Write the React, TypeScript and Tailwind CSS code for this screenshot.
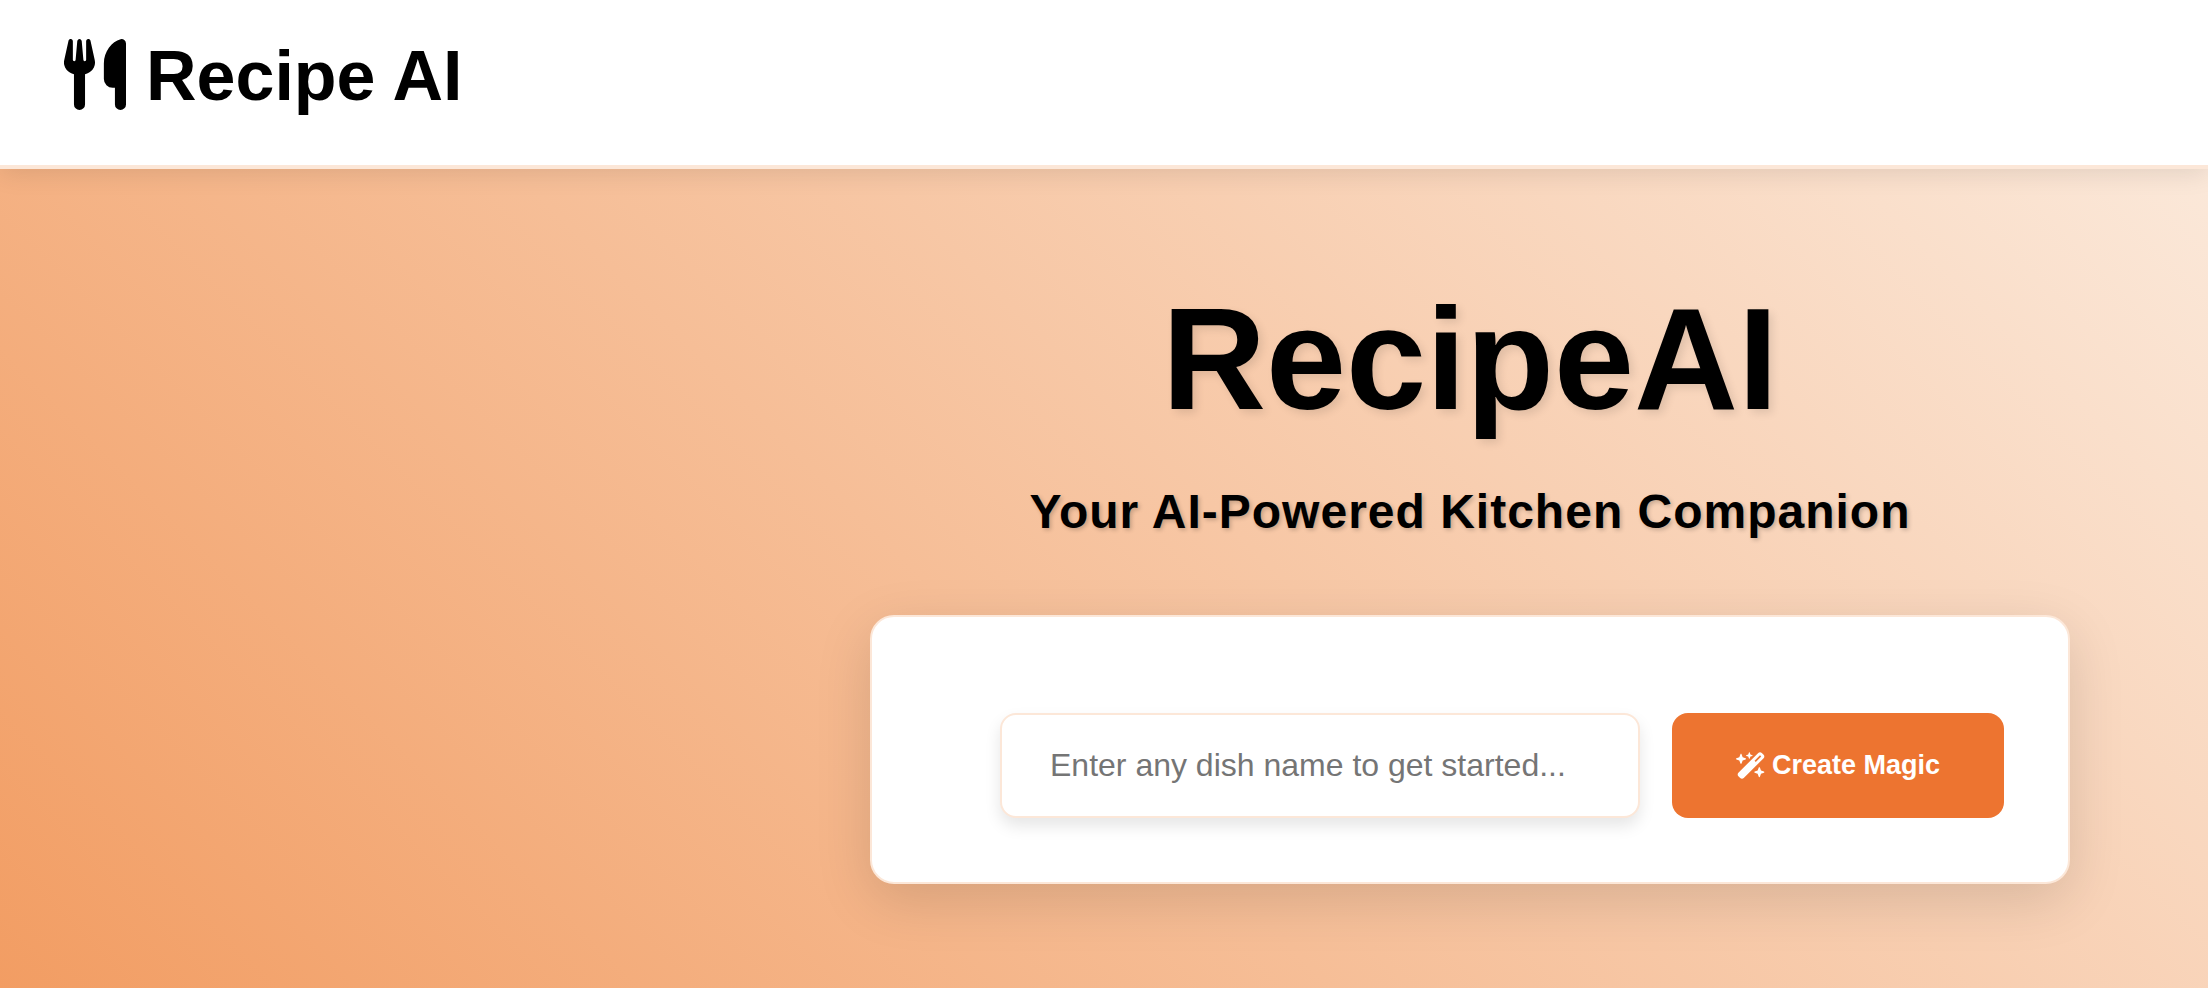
import { FaWandMagicSparkles } from "react-icons/fa6";

function UtensilsIcon({ className }: { className?: string }) {
  return (
    <svg viewBox="0 0 448 512" fill="currentColor" className={className} aria-hidden="true">
      <path d="M221.6 148.7C224.7 161.3 224.8 174.5 222.1 187.2 219.3 200 213.6 211.9 205.6 222.1 191.1 238.6 173 249.1 152 254.1V472a40 40 0 0 1-80 0V254.1C51 250.1 32 238.9 18.3 222.4 10.2 212.2 4.5 200.3 1.8 187.5-1 174.7-.8 161.5 2.3 148.8L32.5 12.5C33.4 8.4 35.5 4.8 38.7 2.6 41.8.3 45.8-.4 49.8.2 53.7.7 57.4 2.7 60 5.7 62.6 8.7 64 12.6 64 16.5V148.8c0 2.8 1 5.5 3 7.5s4.5 3.2 7.1 3.2c2.7 0 5.2-1 7.1-2.9s2.6-4.2 2.8-6.9L96 14.6c.3-3.9 2.1-7.5 5-10.2C104 1.6 108 .3 112 .3s8 1.4 11 4.1c2.9 2.7 4.7 6.3 5 10.2l12 135.1c.2 2.7 1 5.1 2.8 6.9s4.4 2.9 7.1 2.9 5.3-1.1 7.1-3.2 3-4.7 3-7.5V16.5c0-4 1.4-7.8 4-10.8 2.6-3 6.3-5 10.2-5.5 4-.6 8 .1 11.1 2.4 3.2 2.2 5.3 5.8 6.2 9.9z" />
      <path d="M448 472a40 40 0 0 1-80 0V352H352a64 64 0 0 1-64-64V176C288 90 345 18 409 1.2A32 32 0 0 1 448 32z" />
    </svg>
  );
}

function Header() {
  return (
    <header className="relative border-b-4 border-[#fce7d8] bg-white px-16 pt-9 pb-[49px] shadow-[0_4px_24px_rgba(0,0,0,0.1)]">
      <a href="#" className="flex w-fit items-center gap-5 text-[70px] leading-[80px] font-bold text-black">
        <UtensilsIcon className="-mt-1 h-[71px] w-[62px]" />
        <span>Recipe AI</span>
      </a>
    </header>
  );
}

function SearchCard() {
  return (
    <form
      className="mt-[73px] flex w-full gap-8 rounded-3xl border-2 border-[#fce7d8] bg-white pt-24 pr-16 pb-16 pl-32 shadow-[0_16px_56px_rgba(0,0,0,0.13)]"
      onSubmit={(event) => event.preventDefault()}
    >
      <input
        type="text"
        aria-label="Dish name"
        placeholder="Enter any dish name to get started..."
        className="h-[105px] min-w-0 flex-1 rounded-2xl border-2 border-[#fce7d8] bg-white px-12 text-[32px] text-black shadow-[0_8px_16px_rgba(0,0,0,0.1)] outline-none placeholder:text-[#757575]"
      />
      <button
        type="submit"
        className="flex h-[105px] items-center gap-[6px] rounded-2xl bg-[#ed7430] px-16 text-[27px] font-bold whitespace-nowrap text-white"
      >
        <FaWandMagicSparkles className="h-[27px] w-[30px]" aria-hidden="true" />
        Create Magic
      </button>
    </form>
  );
}

export default function App() {
  return (
    <div className="flex min-h-screen flex-col bg-white font-['Liberation_Sans',Arial,sans-serif]">
      <Header />
      <main className="flex flex-1 justify-end bg-[linear-gradient(45deg,#f29d63,#fbe8d9)] pt-[111px] pr-[138px] pb-[104px]">
        <section className="flex w-full max-w-[1200px] flex-col items-center text-center">
          <h1 className="text-[144px] leading-[160px] font-bold text-black [text-shadow:4px_4px_8px_rgba(0,0,0,0.1)]">
            RecipeAI
          </h1>
          <p className="mt-[42px] text-[48px] leading-[60px] font-bold tracking-[1px] text-black [text-shadow:2px_2px_4px_rgba(0,0,0,0.2)]">
            Your AI-Powered Kitchen Companion
          </p>
          <SearchCard />
        </section>
      </main>
    </div>
  );
}
